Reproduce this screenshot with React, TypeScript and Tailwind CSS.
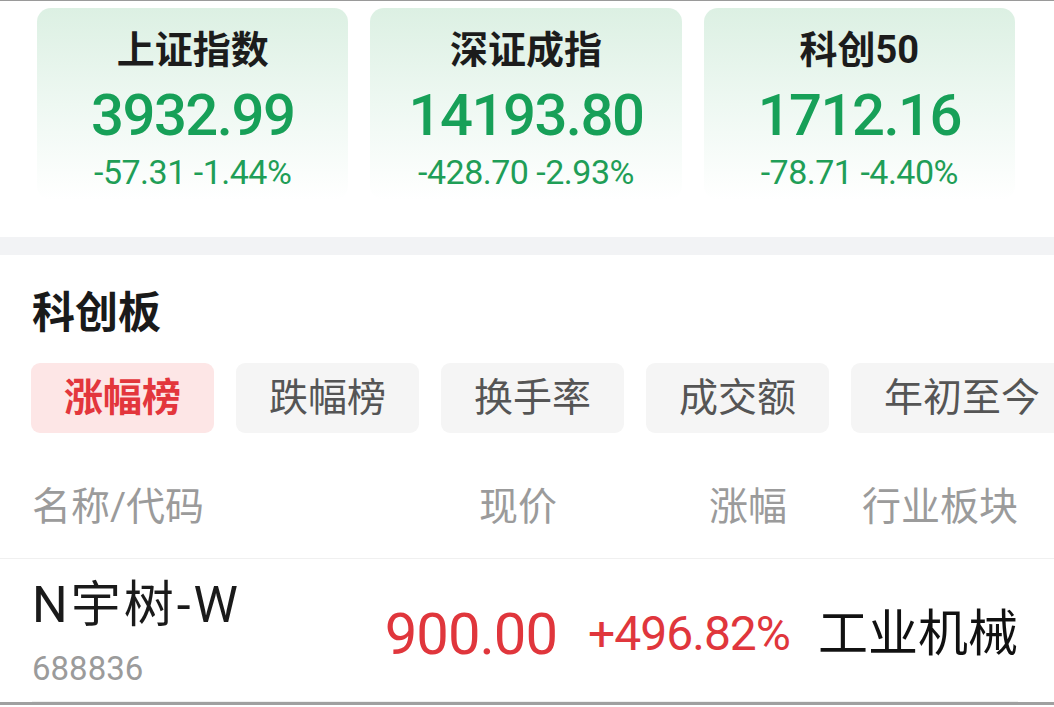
import React from "react";

const indices = [
  { name: "上证指数", value: "3932.99", change: "-57.31 -1.44%" },
  { name: "深证成指", value: "14193.80", change: "-428.70 -2.93%" },
  { name: "科创50", value: "1712.16", change: "-78.71 -4.40%" },
];

const tabs = ["涨幅榜", "跌幅榜", "换手率", "成交额", "年初至今"];

function IndexCard({ name, value, change }: { name: string; value: string; change: string }) {
  return (
    <div className="flex h-[192px] flex-col items-center rounded-[14px] bg-gradient-to-b from-[#dcf0e3] via-[#eef8f2] to-white pt-[20px]">
      <div className="text-[38px] font-bold leading-[44px] text-[#1c1c1c]">{name}</div>
      <div className="mt-[11px] text-[58px] font-medium leading-[64px] tracking-[-1.5px] text-[#17a058]">{value}</div>
      <div className="mt-[5px] text-[34px] leading-[40px] tracking-[-0.5px] text-[#1f9e57]">{change}</div>
    </div>
  );
}

export default function App() {
  return (
    <div className="h-[707px] w-[1054px] overflow-hidden bg-white font-['Roboto','Noto_Sans_CJK_SC',sans-serif]">
      <div className="border-t border-[#9a9a9a] px-[37px] pt-[7px]">
        <div className="grid grid-cols-3 gap-[22px] pr-[2px]">
          {indices.map((i) => (
            <IndexCard key={i.name} {...i} />
          ))}
        </div>
      </div>

      <div className="mt-[37px] h-[18px] bg-[#f2f3f5]" />

      <div className="pt-[33px]">
        <h2 className="px-[32px] text-[43px] font-bold leading-[50px] text-[#1a1a1a]">科创板</h2>

        <div className="mt-[25px] flex gap-[22px] overflow-hidden pl-[31px]">
          {tabs.map((t, idx) => (
            <div
              key={t}
              className={
                idx === 0
                  ? "flex h-[70px] shrink-0 items-center rounded-[9px] bg-[#fde6e6] px-[33px] text-[39px] font-bold text-[#e3363c]"
                  : "flex h-[70px] shrink-0 items-center rounded-[9px] bg-[#f5f5f5] px-[33px] text-[39px] text-[#555555]"
              }
            >
              {t}
            </div>
          ))}
        </div>

        <div className="ml-[32px] mr-[36px] grid grid-cols-[1fr_190px_233px_228px] pb-[27px] pt-[50px] text-[39px] leading-[48px] text-[#9b9b9b]">
          <div>名称/代码</div>
          <div className="text-right">现价</div>
          <div className="pr-[3px] text-right">涨幅</div>
          <div className="text-right">行业板块</div>
        </div>

        <div className="h-px bg-[#f0f0f0]" />

        <div className="ml-[32px] mr-[36px] grid grid-cols-[1fr_190px_233px_228px] items-center border-b border-[#f0f0f0] pb-[12px] pt-[20px]">
          <div>
            <div className="text-[50px] leading-[52px] tracking-[3px] text-[#1a1a1a]">N宇树-W</div>
            <div className="mt-[18px] text-[33px] leading-[40px] text-[#9b9b9b]">688836</div>
          </div>
          <div className="text-right text-[58px] leading-[64px] tracking-[-1px] text-[#e0363c]">900.00</div>
          <div className="text-right text-[48px] leading-[56px] tracking-[-1px] text-[#e0363c]">+496.82%</div>
          <div className="text-right text-[50px] leading-[60px] text-[#111111]">工业机械</div>
        </div>
      </div>
      <div className="h-[3px] bg-[#a0a0a0]" />
    </div>
  );
}
